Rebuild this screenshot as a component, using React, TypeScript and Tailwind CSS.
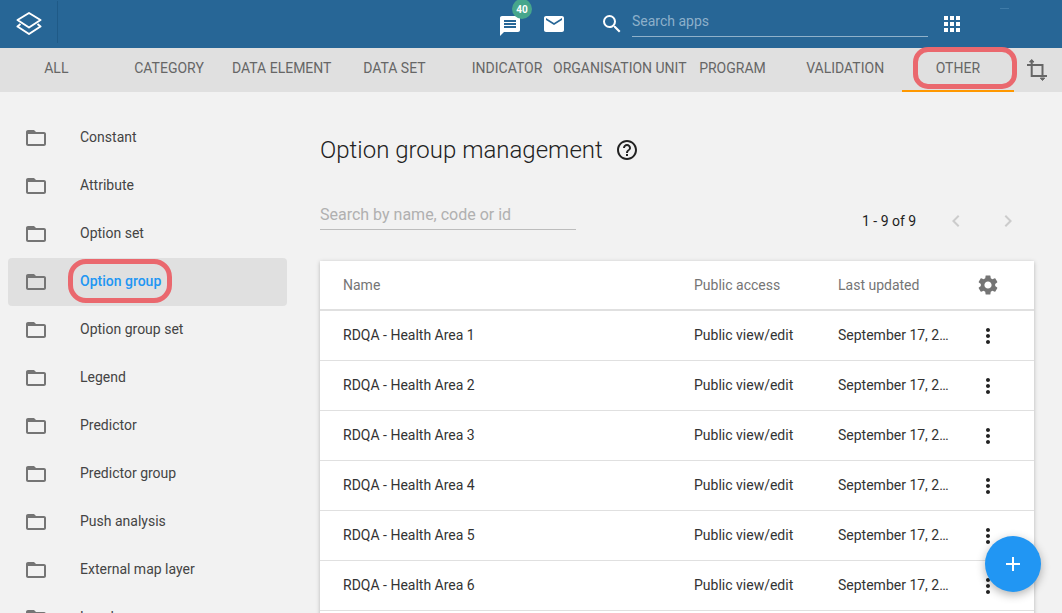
import { MdAdd, MdApps, MdChevronLeft, MdChevronRight, MdEmail, MdFolderOpen, MdHelpOutline, MdMessage, MdMoreVert, MdSearch, MdSettings } from "react-icons/md";

const tabs = ["All", "Category", "Data element", "Data set", "Indicator", "Organisation unit", "Program", "Validation", "Other"];

const sections = ["Constant", "Attribute", "Option set", "Option group", "Option group set", "Legend", "Predictor", "Predictor group", "Push analysis", "External map layer", "Locale"];

const rows = ["RDQA - Health Area 1", "RDQA - Health Area 2", "RDQA - Health Area 3", "RDQA - Health Area 4", "RDQA - Health Area 5", "RDQA - Health Area 6", "RDQA - Health Area 7"];

function Logo() {
  return (
    <svg width="26" height="24" viewBox="0 0 26 24" fill="none" stroke="white" strokeWidth="2" strokeLinejoin="round" className="mt-0.5">
      <path d="M13 2 L24.5 9 L13 16.5 L1.5 9 Z" />
      <path d="M4.5 13 L1.5 15.5 L13 23 L24.5 15.5 L21.5 13" />
    </svg>
  );
}

function CropIcon() {
  return (
    <svg width="24" height="24" viewBox="0 0 24 24" fill="none" stroke="#666666" strokeWidth="2" className="ml-[11px]">
      <path d="M2 7 H17.5 V17" />
      <path d="M6.7 4 V18 H22" />
      <path d="M4.5 4 L6.7 1.5 L9 4 Z" fill="#666666" strokeWidth="1" />
      <path d="M15.3 20 L17.5 22.5 L19.7 20 Z" fill="#666666" strokeWidth="1" />
    </svg>
  );
}

function Header() {
  return (
    <header className="relative flex h-12 items-center bg-[#276696] text-white">
      <div className="flex h-12 w-[58px] items-center justify-center">
        <div className="flex w-[57px] items-center justify-center border-r border-[#1f5a87] h-[42px] -mt-1">
          <Logo />
        </div>
      </div>
      <div className="relative ml-[440px] mt-1">
        <MdMessage size={24} />
        <span className="absolute -top-[15px] left-[14px] flex h-5 w-5 items-center justify-center rounded-full bg-[#47a68c] text-[10px] font-bold">40</span>
      </div>
      <MdEmail size={24} className="ml-5" />
      <MdSearch size={24} className="ml-[34px]" />
      <div className="ml-2 -mt-px flex h-[26px] w-[296px] items-center border-b border-[#8fb1ca] pb-1 text-sm text-[#8db0ca]">Search apps</div>
      <MdApps size={24} className="ml-3" />
      <div className="absolute left-[1000px] top-2 h-px w-[9px] bg-[#3f7ba8]" />
    </header>
  );
}

function Tabs() {
  return (
    <nav className="flex h-11 items-center bg-[#e0e0e0]">
      {tabs.map((tab) => (
        <div
          key={tab}
          className={`flex h-11 w-[112.7px] items-center justify-center whitespace-nowrap text-sm uppercase text-[#666666] ${tab === "Other" ? "border-b-2 border-[#ff9800] pb-0.5" : "pb-1"}`}
        >
          {tab}
        </div>
      ))}
      <CropIcon />
    </nav>
  );
}

function Sidebar() {
  return (
    <aside className="w-[320px] shrink-0 pl-2 pt-[22px]">
      {sections.map((section) => (
        <div
          key={section}
          className={`flex h-12 w-[279px] items-center rounded pl-4 text-sm ${section === "Option group" ? "bg-[#e0e0e0] font-medium text-[#2196f3]" : "text-[#444444]"}`}
        >
          <MdFolderOpen size={24} className="mr-8 text-[#757575]" />
          <span className="-mt-0.5">{section}</span>
        </div>
      ))}
    </aside>
  );
}

function Table() {
  return (
    <div className="w-[714px] bg-white text-sm shadow-[0_1px_4px_rgba(0,0,0,0.25)]">
      <div className="flex h-[50px] items-center border-b-2 border-[#e0e0e0] pl-[23px] text-[#757575]">
        <div className="w-[351px]">Name</div>
        <div className="w-[144px]">Public access</div>
        <div className="w-[112px]">Last updated</div>
        <MdSettings size={24} className="ml-[26px] text-[#757575]" />
      </div>
      {rows.map((row) => (
        <div key={row} className="flex h-[50px] items-center border-b border-[#e0e0e0] pl-[23px] text-[#333333]">
          <div className="-mt-0.5 w-[351px]">{row}</div>
          <div className="-mt-0.5 w-[144px]">Public view/edit</div>
          <div className="-mt-0.5 w-[112px] truncate">September 17, 2018</div>
          <MdMoreVert size={24} className="ml-[26px] text-[#222222]" />
        </div>
      ))}
    </div>
  );
}

function Main() {
  return (
    <main className="min-w-0 flex-1">
      <div className="mt-10 flex h-9 items-center">
        <h1 className="text-2xl font-light text-[#222222]">Option group management</h1>
        <MdHelpOutline size={24} className="ml-3 text-[#222222]" />
      </div>
      <div className="mt-[34px] flex items-start">
        <div className="flex h-7 w-64 items-center border-b border-[#bdbdbd] pb-px text-base text-[#b0b0b0]">Search by name, code or id</div>
        <div className="ml-[286px] mt-[7px] flex items-center text-sm text-[#222222]">
          <span className="w-[54px] whitespace-nowrap">1 - 9 of 9</span>
          <MdChevronLeft size={24} className="ml-7 text-[#cccccc]" />
          <MdChevronRight size={24} className="ml-7 text-[#cccccc]" />
        </div>
      </div>
      <div className="mt-7">
        <Table />
      </div>
    </main>
  );
}

export default function App() {
  return (
    <div className="relative h-[613px] w-[1062px] overflow-hidden bg-[#f2f2f2] font-['Roboto',sans-serif]">
      <Header />
      <Tabs />
      <div className="flex">
        <Sidebar />
        <Main />
      </div>
      {/* red annotation rings on top of the screenshot */}
      <div className="absolute left-[913px] top-[47px] h-[42px] w-[104px] rounded-[15px] border-[5px] border-[#ea686e]" />
      <div className="absolute left-[68px] top-[259px] h-[44px] w-[104px] rounded-[18px] border-[5px] border-[#ea686e]" />
      <button className="absolute left-[985px] top-[536px] flex h-14 w-14 items-center justify-center rounded-full bg-[#2196f3] text-white shadow-[0_3px_10px_rgba(0,0,0,0.3)]">
        <MdAdd size={24} />
      </button>
    </div>
  );
}
